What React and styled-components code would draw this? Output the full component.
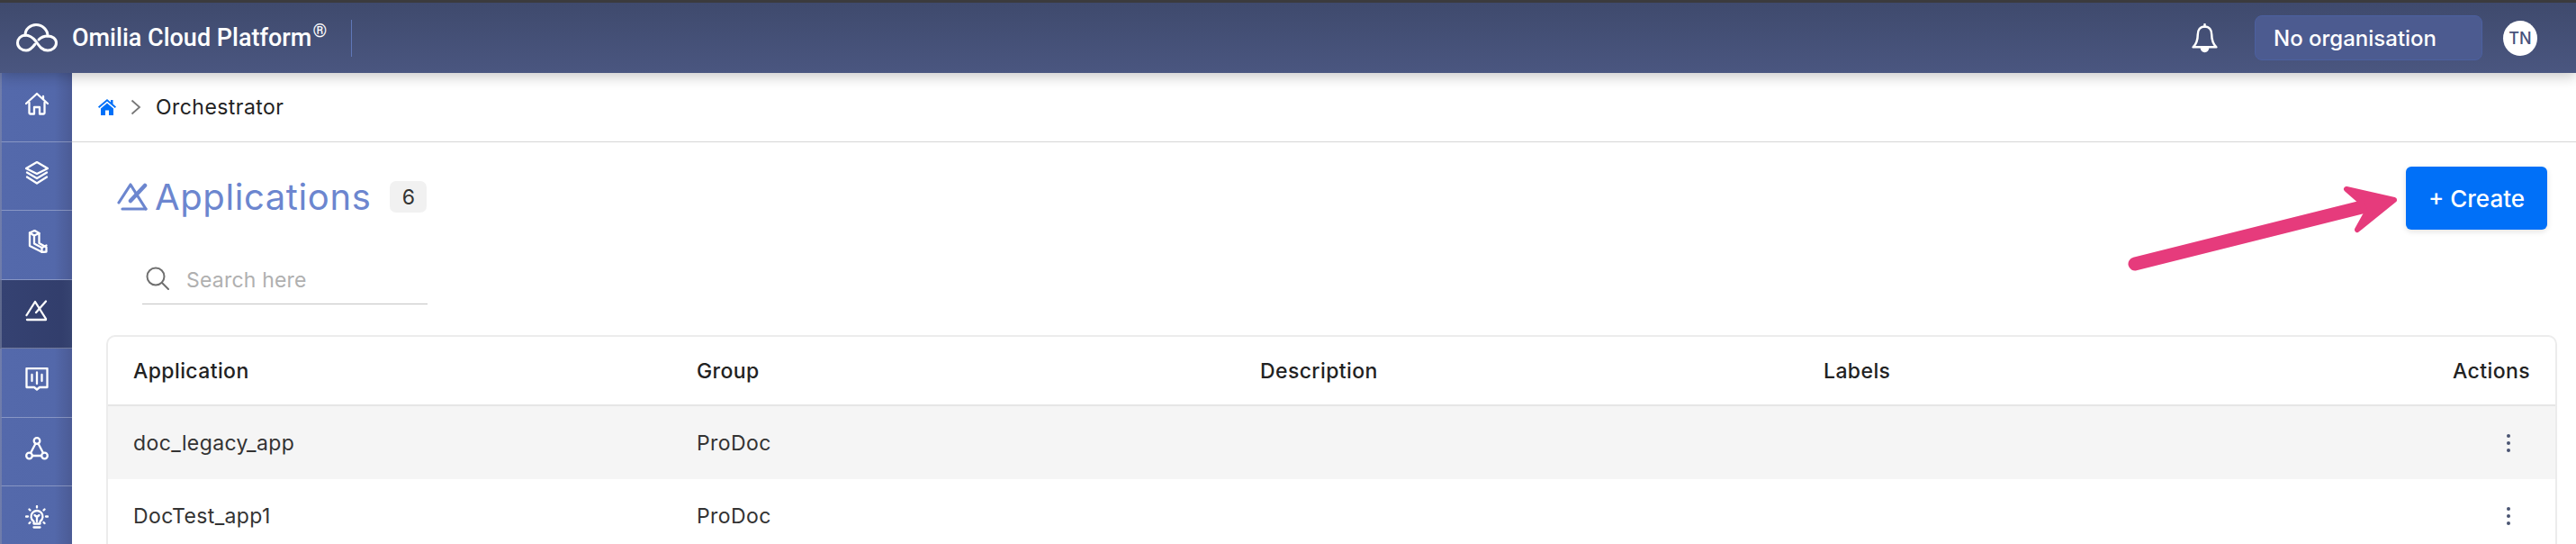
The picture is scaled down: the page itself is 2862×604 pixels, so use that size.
import React from 'react'
import styled, { createGlobalStyle } from 'styled-components'

const rows = [
  { name: 'doc_legacy_app', group: 'ProDoc', shaded: true },
  { name: 'DocTest_app1', group: 'ProDoc' },
]

const Stroke = ({ children, size = 26, width = 2.3 }) => (
  <svg width={size} height={size} viewBox="0 0 26 26" fill="none" stroke="currentColor"
    strokeWidth={width} strokeLinecap="round" strokeLinejoin="round">
    {children}
  </svg>
)

const HomeIcon = () => (
  <Stroke>
    <path d="M1 13 13 2l12 11" />
    <path d="M20 5V8" />
    <path d="M4.500 12v11.500a1 1 0 0 0 1 1H10v-7.500h6v7.500h4.500a1 1 0 0 0 1-1V12" />
  </Stroke>
)
const LayersIcon = () => (
  <Stroke>
    <path d="M13 1 25 8 13 14 1 8Z" />
    <path d="M2 12.500 13 19l11-6.500" />
    <path d="M2 17.500 13 24.500l11-7" />
  </Stroke>
)
const BlockIcon = () => (
  <Stroke>
    <path d="M5 3.500 10.500 1l5 3V15l8 4.500v5L19 25 5 18Z" />
    <path d="M5 3.500 10 6.500V15.500L18.500 20v5" />
    <path d="M10 6.500 15.500 4" />
    <path d="M18.500 20 23.500 17.500" />
  </Stroke>
)
const AppIcon = () => (
  <Stroke>
    <path d="M1.500 18 11 3l12 19" />
    <path d="M2 23h21" />
    <path d="M12 15 23 2.500" />
  </Stroke>
)
const ReportIcon = () => (
  <Stroke>
    <path d="M1.500 1h23v21H16l-3 2.500L10 22H1.500Z" />
    <path d="M7.500 8v7M13 5.500V18M18.500 8v7" />
  </Stroke>
)
const GraphIcon = () => (
  <Stroke>
    <circle cx="13" cy="4.500" r="3.300" />
    <circle cx="4.500" cy="21" r="3.300" />
    <circle cx="21.500" cy="21" r="3.300" />
    <path d="M11.500 7.500 6 18M14.500 7.500 20 18M8 21h10" />
  </Stroke>
)
const BulbIcon = () => (
  <Stroke>
    <path d="M13 1v1.500M4.500 4.500 5.500 5.500M21.500 4.500 20.500 5.500M1 12.500h2M23 12.500h2M4.500 20 5.500 19M21.500 20 20.500 19" />
    <path d="M9.500 20.500v-2.500a6.500 6.500 0 1 1 7 0v2.500Z" />
    <path d="M9.500 24.500h7M13 18v-5l-2.500-2M13 13l2.500-2" />
  </Stroke>
)

const navItems = [
  { Icon: HomeIcon },
  { Icon: LayersIcon },
  { Icon: BlockIcon },
  { Icon: AppIcon, active: true },
  { Icon: ReportIcon },
  { Icon: GraphIcon },
  { Icon: BulbIcon },
]

export default function App() {
  return (
    <>
      <GlobalStyle />
      <Page>
        <Header>
          <Brand>
            <svg width="46" height="32" viewBox="0 0 46 32" fill="none" stroke="#fff" strokeWidth="3" strokeLinecap="round" strokeLinejoin="round">
              <path d="M10 13C10 6 16 1.500 22 1.500 29 1.500 35 7 35 14" />
              <path d="M10 13C5 13.500 1.500 17 1.500 21.500 1.500 26.500 6 30 11 30 15 30 18 27 21 23" />
              <path d="M10 13C14 13 18 15 22 20 26 26 29 30 35 30 40 30 44.500 26.500 44.500 21.500 44.500 17 40 14 35 14 31 14 28 15 25 18" />
            </svg>
            <BrandName>Omilia Cloud Platform<sup>®</sup></BrandName>
            <BrandDivider />
          </Brand>
          <HeaderRight>
            <svg width="29" height="33" viewBox="0 0 28 32" fill="none" stroke="#fff" strokeWidth="2.400" strokeLinejoin="round">
              <path d="M14 3.500c-5 0-7.500 3.500-7.500 8.500 0 6-1.500 10-5 13.500h25c-3.500-3.500-5-7.500-5-13.500 0-5-2.500-8.500-7.500-8.500Z" />
              <path d="M14 1v2.500" strokeLinecap="round" />
              <path d="M10.500 26.500a3.500 3.500 0 0 0 7 0Z" fill="#fff" />
            </svg>
            <OrgSelect>No organisation</OrgSelect>
            <Avatar>TN</Avatar>
          </HeaderRight>
        </Header>
        <Body>
          <Sidebar>
            {navItems.map(({ Icon, active }, i) => (
              <NavItem key={i} $active={active}><Icon /></NavItem>
            ))}
          </Sidebar>
          <Main>
            <Breadcrumb>
              <svg width="20" height="18" viewBox="0 0 20 18" fill="#0070f8">
                <path d="M10 0 0 8.500 1.200 10 10 2.500 18.800 10 20 8.500 16.500 5.500V1h-2.500v2.400Z" />
                <path d="M3 10.500 10 4.500l7 6V18h-5v-5.500H8V18H3Z" />
              </svg>
              <svg width="12" height="18" viewBox="0 0 12 18" fill="none" stroke="#777" strokeWidth="1.800">
                <path d="M1.500 1.500 10 9l-8.500 7.500" />
              </svg>
              <Crumb>Orchestrator</Crumb>
            </Breadcrumb>
            <TitleRow>
              <Title>
                <TitleIcon>
                  <svg width="34" height="32" viewBox="0 0 34 32" fill="none" stroke="currentColor" strokeWidth="3.200" strokeLinecap="round" strokeLinejoin="round">
                    <path d="M2 22 15 2l17 27" />
                    <path d="M6 29h26" />
                    <path d="M15 20 31 3" strokeWidth="4.500" />
                  </svg>
                </TitleIcon>
                <TitleText>Applications</TitleText>
                <CountBadge>6</CountBadge>
              </Title>
              <CreateButton>+ Create</CreateButton>
            </TitleRow>
            <SearchBox>
              <svg width="26" height="26" viewBox="0 0 26 26" fill="none" stroke="#6f6f6f" strokeWidth="2" strokeLinecap="round">
                <circle cx="11" cy="11" r="9.500" />
                <path d="M18 18 25 25" />
              </svg>
              <SearchText>Search here</SearchText>
            </SearchBox>
            <Table>
              <HeadRow>
                <span>Application</span>
                <span>Group</span>
                <span>Description</span>
                <span>Labels</span>
                <ActionsCell>Actions</ActionsCell>
              </HeadRow>
              {rows.map((row) => (
                <Row key={row.name} $shaded={row.shaded}>
                  <span>{row.name}</span>
                  <span>{row.group}</span>
                  <span />
                  <span />
                  <ActionsCell><Dots><i /><i /><i /></Dots></ActionsCell>
                </Row>
              ))}
            </Table>
          </Main>
        </Body>
        <Arrow width="2862" height="604" viewBox="0 0 2862 604" fill="none" stroke="#e63b7c" strokeLinecap="round" strokeLinejoin="round">
          <path d="M2372 293 2632 228" strokeWidth="15" />
          <path d="M2607 210 2660 222 2619 255 2629 237 2623 224Z" fill="#e63b7c" strokeWidth="6" />
        </Arrow>
      </Page>
    </>
  )
}

const GlobalStyle = createGlobalStyle`
  html, body {
    margin: 0;
    padding: 0;
    height: 100%;
    background: #fff;
  }
  #root {
    height: 100%;
  }
  * {
    box-sizing: border-box;
  }
`

const Page = styled.div`
  position: relative;
  height: 100vh;
  overflow: hidden;
  display: flex;
  flex-direction: column;
  border-top: 3px solid #3b3b3d;
  font-family: Inter, "Open Sans", sans-serif;
  color: #222;
`

const Header = styled.header`
  position: relative;
  z-index: 2;
  flex: 0 0 78px;
  display: flex;
  align-items: center;
  justify-content: space-between;
  padding: 0 43px 0 18px;
  background: linear-gradient(180deg, #3f4a6d, #4a5680);
  box-shadow: 0 4px 14px rgba(0, 0, 0, 0.22);
`

const Brand = styled.div`
  display: flex;
  align-items: center;
`

const BrandName = styled.span`
  margin-left: 16px;
  font-family: Roboto, sans-serif;
  font-weight: 500;
  font-size: 27px;
  color: #fff;
  sup {
    margin-left: 1px;
    font-size: 20px;
    font-weight: 400;
    line-height: 0;
  }
`

const BrandDivider = styled.span`
  width: 1px;
  height: 41px;
  margin-left: 27px;
  background: #6078b8;
`

const HeaderRight = styled.div`
  display: flex;
  align-items: center;
`

const OrgSelect = styled.div`
  display: flex;
  align-items: center;
  width: 253px;
  height: 50px;
  margin-left: 41px;
  padding-left: 20px;
  border: 1px solid #4c60a0;
  border-radius: 8px;
  background: #4c5b90;
  color: #fff;
  font-size: 24px;
  font-weight: 500;
`

const Avatar = styled.div`
  display: flex;
  align-items: center;
  justify-content: center;
  width: 38px;
  height: 39px;
  margin-left: 23px;
  border-radius: 50%;
  background: #fff;
  color: #46527c;
  font-size: 18px;
  font-weight: 500;
`

const Body = styled.div`
  flex: 1;
  min-height: 0;
  display: flex;
`

const Sidebar = styled.nav`
  flex: 0 0 80px;
  display: flex;
  flex-direction: column;
`

const NavItem = styled.div`
  flex: 0 0 76.500px;
  display: flex;
  align-items: center;
  justify-content: center;
  padding-bottom: 7px;
  color: #fff;
  border-bottom: 1px solid rgba(255, 255, 255, 0.3);
  border-left: 2px solid rgba(255, 255, 255, 0.2);
  background: ${(p) =>
    p.$active
      ? 'linear-gradient(90deg, #354272, #323e6c 85%, #364370)'
      : 'linear-gradient(90deg, #5469ab, #5368aa 75%, #4b5b95)'};
`

const Main = styled.main`
  flex: 1;
  min-width: 0;
  display: flex;
  flex-direction: column;
`

const Breadcrumb = styled.div`
  flex: 0 0 77px;
  display: flex;
  align-items: center;
  padding: 0 0 0 29px;
  gap: 16px;
  border-bottom: 1px solid #d6d6d6;
`

const Crumb = styled.span`
  font-size: 23px;
  letter-spacing: 0.45px;
`

const TitleRow = styled.div`
  flex: none;
  display: flex;
  align-items: center;
  justify-content: space-between;
  margin-top: 27px;
  padding: 0 32px 0 50px;
`

const Title = styled.div`
  display: flex;
  align-items: center;
  margin-bottom: 3px;
`

const TitleIcon = styled.span`
  display: flex;
  color: #6c86cf;
`

const TitleText = styled.h1`
  margin: 0 0 0 8px;
  font-size: 40px;
  font-weight: 400;
  letter-spacing: 0.6px;
  color: #6c86cf;
`

const CountBadge = styled.span`
  display: flex;
  align-items: center;
  justify-content: center;
  width: 41px;
  height: 35px;
  margin-left: 21px;
  border-radius: 7px;
  background: #f1f1f1;
  font-size: 23px;
  color: #333;
`

const CreateButton = styled.button`
  width: 157px;
  height: 70px;
  border: 0;
  border-radius: 6px;
  background: #0070f8;
  box-shadow: 0 2px 6px rgba(0, 0, 0, 0.12);
  color: #fff;
  font-family: inherit;
  font-size: 26px;
  font-weight: 500;
`

const SearchBox = styled.div`
  flex: none;
  display: flex;
  align-items: center;
  gap: 19px;
  width: 317px;
  height: 54px;
  margin: 29px 0 0 78px;
  padding: 0 0 4px 4px;
  border-bottom: 1px solid #c4c4c4;
`

const SearchText = styled.span`
  margin-top: 5px;
  font-size: 23px;
  letter-spacing: 0.2px;
  color: #b0b0b0;
`

const Table = styled.section`
  flex: none;
  margin: 34px 21px 0 38px;
  border: 2px solid #ececec;
  border-bottom: 0;
  border-radius: 10px 10px 0 0;
`

const columns = `
  display: grid;
  grid-template-columns: repeat(4, 626px) 1fr;
  align-items: center;
  padding: 0 28px 0 28px;
  font-size: 23px;
  letter-spacing: 0.4px;
`

const HeadRow = styled.div`
  ${columns}
  height: 77px;
  border-bottom: 2px solid #e6e6e6;
  font-weight: 500;
`

const Row = styled.div`
  ${columns}
  height: 81px;
  color: #333;
  background: ${(p) => (p.$shaded ? '#f5f5f5' : '#fff')};
`

const ActionsCell = styled.span`
  display: flex;
  justify-content: flex-end;
`

const Dots = styled.span`
  display: flex;
  flex-direction: column;
  gap: 4px;
  margin-right: 22px;
  i {
    width: 4px;
    height: 4px;
    border-radius: 50%;
    background: #4a5472;
  }
`

const Arrow = styled.svg`
  position: absolute;
  top: -3px;
  left: 0;
  z-index: 3;
  pointer-events: none;
`
